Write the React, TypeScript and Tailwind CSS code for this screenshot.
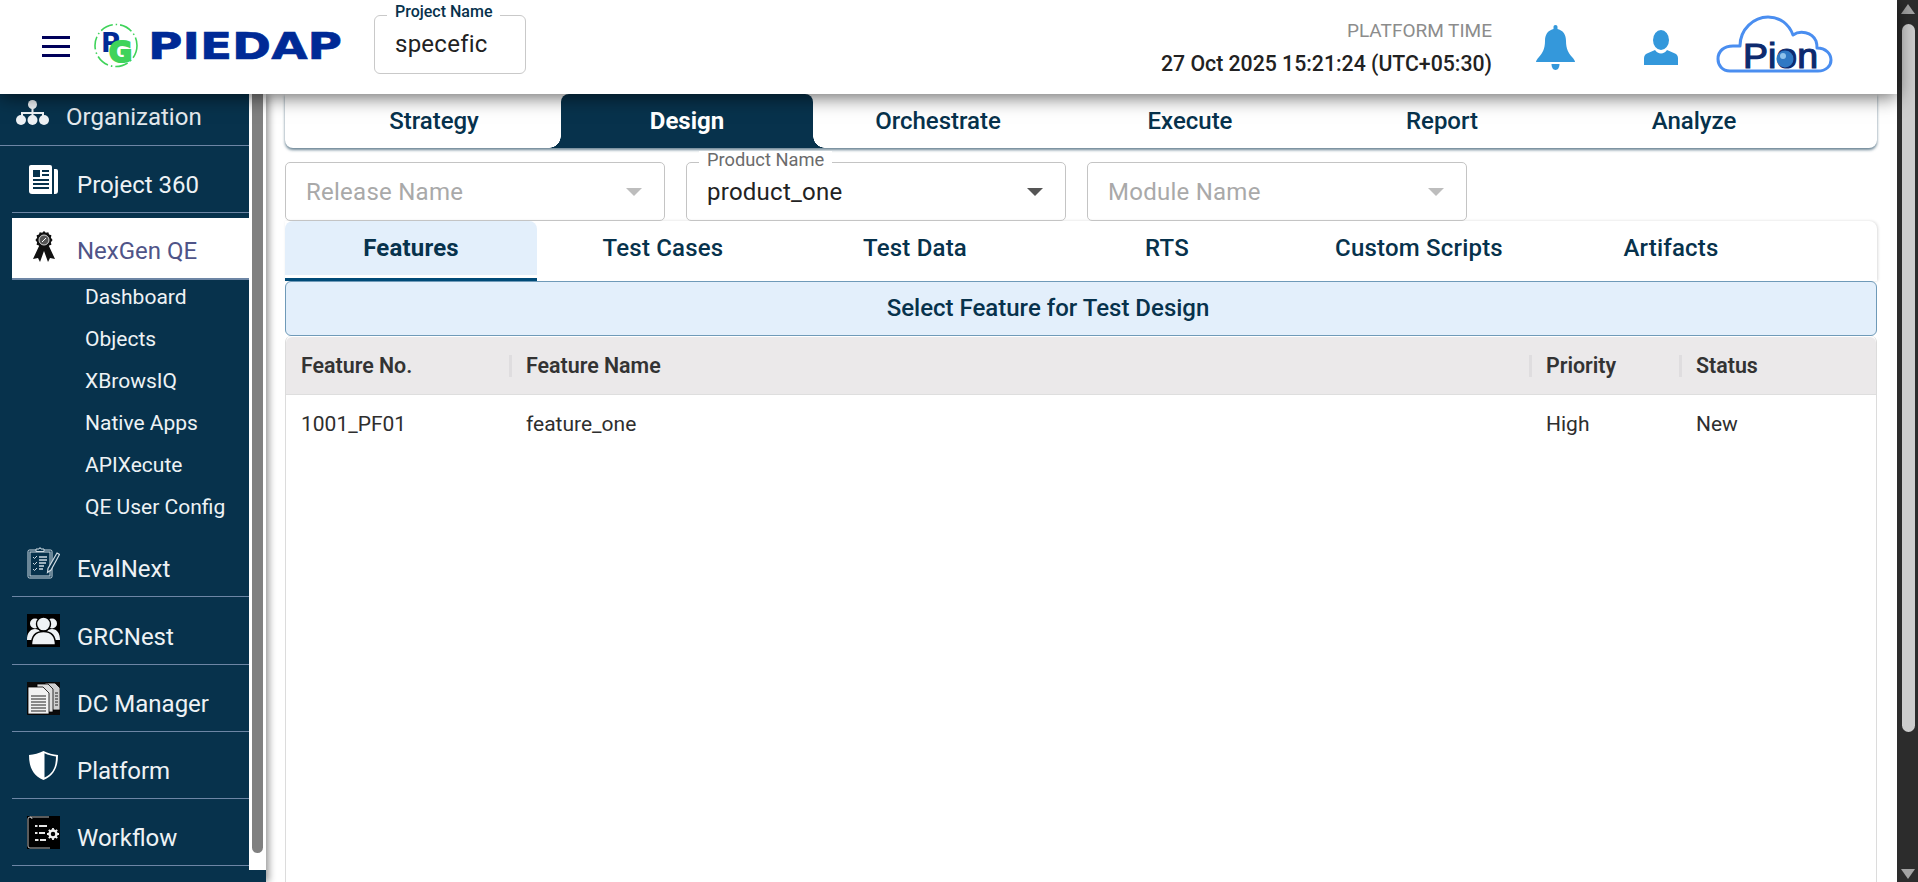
import { ReactNode } from 'react';

const subItems = ['Dashboard', 'Objects', 'XBrowsIQ', 'Native Apps', 'APIXecute', 'QE User Config'];
const stages = ['Strategy', 'Design', 'Orchestrate', 'Execute', 'Report', 'Analyze'];
const designTabs = ['Features', 'Test Cases', 'Test Data', 'RTS', 'Custom Scripts', 'Artifacts'];

/* ── Logos ── */
const PiedapLogo = () => (
  <svg width="250" height="50" viewBox="0 0 250 50" className="shrink-0">
    <circle cx="22" cy="22.5" r="21" fill="none" stroke="#3fd35a" strokeWidth="1.6" strokeDasharray="13 3 1.5 3" />
    <text x="7" y="29" fontFamily="DejaVu Sans" fontWeight="700" fontSize="26" fill="#002a96">P</text>
    <text x="15" y="39" fontFamily="DejaVu Sans" fontWeight="700" fontSize="28" fill="#3fd35a" stroke="#3fd35a" strokeWidth="2.2">G</text>
    <text x="54" y="36" fontFamily="DejaVu Sans" fontWeight="700" fontSize="37" fill="#002a96" stroke="#002a96" strokeWidth="0.6" textLength="194" lengthAdjust="spacingAndGlyphs">PIEDAP</text>
  </svg>
);

const PionLogo = () => (
  <svg width="130" height="70" viewBox="0 0 130 70" className="shrink-0">
    <path
      d="M20 60 C12 60 8 54 8 48 C8 40 14 35 23 35 L30 35 C30 18 44 6 58 6 C70 6 79 13 83 24 C90 19 102 21 106 30 C107 33 107 35 107 37 C116 37 121 43 121 49 C121 55 116 60 108 60 Z"
      fill="#fff"
      stroke="#4a8ef0"
      strokeWidth="3"
      strokeLinejoin="round"
    />
    <text x="33" y="57" fontFamily="Liberation Sans" fontSize="35" fill="#0d2a6e" stroke="#0d2a6e" strokeWidth="1.2" textLength="75" lengthAdjust="spacingAndGlyphs">Pion</text>
    <circle cx="75" cy="48" r="8.5" fill="#2f78c4" />
    <circle cx="73" cy="45" r="3" fill="#8fc2ec" />
  </svg>
);

/* ── Sidebar icons ── */
const OrgIcon = () => (
  <svg width="33" height="25" viewBox="0 0 33 25" fill="#eef2f5">
    <circle cx="16.5" cy="4.5" r="4.5" />
    <path d="M15.5 8h2v4h10.5v4h-2v-2h-8.5v2h-2v-2H7v2H5v-4h10.5z" />
    <circle cx="5" cy="20" r="5" />
    <circle cx="16.5" cy="20" r="5" />
    <circle cx="28" cy="20" r="5" />
  </svg>
);

const ProjectIcon = () => (
  <svg width="29" height="29" viewBox="0 0 29 29">
    <path d="M2 0h19a2 2 0 0 1 2 2v27H3a3 3 0 0 1-3-3V2a2 2 0 0 1 2-2z" fill="#fff" />
    <path d="M25 4h2a2 2 0 0 1 2 2v20a3 3 0 0 1-3 3h-1z" fill="#fff" />
    <rect x="24" y="0" width="1" height="29" fill="#07324c" />
    <path d="M4 5h7v7H4zM13 5h7v2h-7zM13 9h7v2h-7zM4 14h16v2H4zM4 18h16v2H4zM4 22h16v2H4z" fill="#07324c" />
  </svg>
);

const BadgeIcon = () => (
  <svg width="22" height="31" viewBox="0 0 22 31">
    <path d="M7 13 L0 28 L5 27 L7 31 L11 20 L15 31 L17 27 L22 28 L15 13z" fill="#111" />
    <path d="M11 0l1.800 1.700 2.500-.5.8 2.300 2.300.8-.5 2.500L19.600 9l-1.700 2.200.5 2.500-2.300.8-.8 2.300-2.500-.5L11 18l-1.800-1.700-2.500.5-.8-2.300-2.300-.8.5-2.500L2.400 9l1.700-2.200-.5-2.500 2.300-.8.8-2.300 2.500.5z" fill="#111" />
    <circle cx="11" cy="9" r="5" fill="#555" stroke="#fff" strokeWidth="0.8" />
    <path d="M9 11l4-4" stroke="#fff" strokeWidth="1" />
  </svg>
);

const EvalIcon = () => (
  <svg width="33" height="32" viewBox="0 0 33 32" fill="none" stroke="#cfdbe3" strokeWidth="1">
    <rect x="1" y="3" width="24" height="28" rx="1.500" />
    <rect x="3" y="5" width="20" height="24" />
    <path d="M9 4V2h3l1-1.500 1 1.500h3v2.500H9z" fill="#07324c" />
    <path d="M6 10l1.500 1.500L10 9M6 16l1.500 1.500L10 15M6 22l1.500 1.500L10 21" />
    <path d="M12 10h8M12 13h8M12 16h7M12 19h5M12 22h4" strokeWidth="1.300" />
    <path d="M30 6l2.500 1.500L24 23l-3.500 2.500.5-4z" fill="#07324c" strokeWidth="1.200" />
  </svg>
);

const UsersIcon = () => (
  <svg width="33" height="33" viewBox="0 0 33 33">
    <rect width="33" height="33" fill="#000" />
    <circle cx="8" cy="9.500" r="5" fill="#eef2f5" />
    <circle cx="25" cy="9.500" r="5" fill="#eef2f5" />
    <path d="M0 26c0-7 3-11 8-11s8 4 8 11zM17 26c0-7 3-11 8-11s8 4 8 11z" fill="#eef2f5" />
    <circle cx="16.500" cy="10" r="7" fill="#eef2f5" stroke="#000" strokeWidth="1.400" />
    <path d="M4.500 31c0-10 5-13.500 12-13.500s12 3.500 12 13.500z" fill="#eef2f5" stroke="#000" strokeWidth="1.400" />
  </svg>
);

const DocsIcon = () => (
  <svg width="33" height="33" viewBox="0 0 33 33">
    <rect width="33" height="33" fill="#0b0b0b" />
    <path d="M18 1h10l5 5v22H18z" fill="#cfcfcf" stroke="#000" strokeWidth="0.800" />
    <path d="M10 2h11l5 5v23H10z" fill="#dcdcdc" stroke="#000" strokeWidth="0.800" />
    <path d="M1 5h15l6 6v21H1z" fill="#f1f1f1" stroke="#000" strokeWidth="0.800" />
    <path d="M4 14h15M4 17h15M4 20h15M4 23h15M4 26h15M4 29h15" stroke="#222" strokeWidth="1.100" />
    <path d="M28 11h3M28 14h3M28 17h3M28 20h3M28 23h3" stroke="#222" strokeWidth="1" />
  </svg>
);

const ShieldIcon = () => (
  <svg width="29" height="29" viewBox="0 0 29 29">
    <path d="M14.500 0C10 2.500 5 3.500 0 4c0 11 3 20 14.500 25C26 24 29 15 29 4c-5-.5-10-1.500-14.500-4z" fill="#fff" />
    <path d="M15.500 2.300c3.600 1.800 7.600 2.700 11.500 3.300 0 9.400-2.500 17-11.500 21z" fill="#07324c" />
  </svg>
);

const WorkflowIcon = () => (
  <svg width="33" height="33" viewBox="0 0 33 33">
    <rect width="33" height="33" fill="#000" />
    <path d="M1 30V3a2 2 0 0 1 4 0M3 1h19M1 30a2 2 0 0 0 2 2h20" stroke="#e6e6e6" strokeWidth="0.800" fill="none" />
    <path d="M8 10h2.500M12 10h8M8 17h2.500M12 17h6M8 24h3.500M13 24h6" stroke="#e6e6e6" strokeWidth="1.800" />
    <circle cx="26" cy="18" r="3.500" fill="none" stroke="#eee" strokeWidth="2.500" />
    <path d="M26 12v2.500M26 21.500V24M20 18h2.500M29.500 18H32M21.800 13.800l1.800 1.800M28.400 20.400l1.800 1.800M21.800 22.200l1.800-1.800M28.400 15.600l1.800-1.800" stroke="#eee" strokeWidth="1.800" />
  </svg>
);

/* ── Sidebar ── */
const NavRow = ({ icon, label, tall }: { icon: ReactNode; label: string; tall?: boolean }) => (
  <div className={`ml-3 flex shrink-0 items-center gap-[17px] border-b border-[#6d86a5] pl-[15px] ${tall ? 'h-[68px]' : 'h-[67px]'}`}>
    <div className="flex w-[33px] shrink-0 justify-center">{icon}</div>
    <span className="mt-3 text-[24px] leading-7 text-[#eef2f5]">{label}</span>
  </div>
);

const Sidebar = () => (
  <aside className="relative z-[5] flex h-full w-[266px] shrink-0 flex-col bg-[#07324c] pb-3 shadow-[3px_0_7px_rgba(0,0,0,0.4)]">
    <div className="flex min-h-0 flex-1">
      <nav className="flex w-[249px] shrink-0 flex-col overflow-hidden">
        <div className="flex h-[52px] shrink-0 items-center gap-[17px] border-b border-[#6d86a5] pl-4">
          <div className="mb-[14px]"><OrgIcon /></div>
          <span className="mb-[6px] text-[24px] leading-7 text-[#e4eaee]">Organization</span>
        </div>
        <NavRow icon={<ProjectIcon />} label="Project 360" />
        <div className="ml-3 mt-[5px] flex h-[62px] shrink-0 items-center gap-[17px] border-b-2 border-[#6d86a5] bg-white pl-[15px]">
          <div className="flex w-[33px] shrink-0 justify-center pb-[4px]"><BadgeIcon /></div>
          <span className="mt-[6px] text-[24px] leading-7 text-[#4f5488]">NexGen QE</span>
        </div>
        <div className="flex h-[249px] shrink-0 flex-col gap-2 pl-[85px] pt-px">
          {subItems.map(item => (
            <div key={item} className="flex h-[34px] items-center text-[21px] text-[#eef2f5]">{item}</div>
          ))}
        </div>
        <NavRow icon={<EvalIcon />} label="EvalNext" tall />
        <NavRow icon={<UsersIcon />} label="GRCNest" tall />
        <NavRow icon={<DocsIcon />} label="DC Manager" />
        <NavRow icon={<ShieldIcon />} label="Platform" />
        <NavRow icon={<WorkflowIcon />} label="Workflow" />
      </nav>
      {/* inner scrollbar */}
      <div className="h-full w-[17px] bg-white pl-[3px] pr-[3px] pb-[17px]">
        <div className="h-full rounded-b-[6px] bg-[#808080]" />
      </div>
    </div>
  </aside>
);

/* ── Top bar ── */
const TopBar = () => (
  <header className="relative z-10 flex h-[94px] shrink-0 items-center bg-white pl-[42px] pr-[57px] shadow-[0_3px_18px_rgba(0,0,0,0.6)]">
    <div className="flex w-[28px] shrink-0 flex-col gap-[6px] pb-[2px]">
      <span className="h-[3px] bg-[#00005a]" />
      <span className="h-[3px] bg-[#00005a]" />
      <span className="h-[3px] bg-[#00005a]" />
    </div>
    <div className="ml-6 mt-[1px]"><PiedapLogo /></div>
    <div className="relative ml-[30px] mb-[6px] flex h-[59px] w-[152px] shrink-0 items-center rounded-[6px] border border-[#c9c9c9] pl-5">
      <span className="absolute left-3 top-[-13px] bg-white px-2 text-[16px] font-medium leading-[18px] text-[#07324c]">Project Name</span>
      <span className="text-[24px] tracking-[0.25px] text-[#222]">specefic</span>
    </div>
    <div className="ml-auto flex flex-col items-end">
      <span className="text-[19px] leading-6 text-[#8c8c8c]">PLATFORM TIME</span>
      <span className="mt-[9px] text-[21.25px] font-medium leading-6 text-[#222]">27 Oct 2025 15:21:24 (UTC+05:30)</span>
    </div>
    <svg width="39" height="45" viewBox="0 0 39 45" fill="#3498db" className="ml-[44px] shrink-0">
      <path d="M19.500 0c1.300 0 2 .8 2 2v2c6 1.500 8.500 6 8.500 12 0 8 2.500 12 6 16 2 2.300 3 4 3 5H0c0-1 1-2.700 3-5 3.500-4 6-8 6-16 0-6 2.500-10.500 8.500-12V2c0-1.200.7-2 2-2z" />
      <path d="M15.500 39h8c0 3-1.500 6-4 6s-4-3-4-6z" />
    </svg>
    <svg width="34" height="35" viewBox="0 0 34 35" fill="#3498db" className="ml-[69px] shrink-0">
      <ellipse cx="17" cy="10" rx="8" ry="10" />
      <path d="M11 20c1.500 2 3.500 3.500 6 3.500s4.500-1.500 6-3.500l8 3.500c2 1 3 2.500 3 5V35H0v-6.500c0-2.500 1-4 3-5z" />
    </svg>
    <div className="ml-[32px] mt-[-2px]"><PionLogo /></div>
  </header>
);

/* ── Main content ── */
const SelectBox = ({ placeholder, label, value }: { placeholder?: string; label?: string; value?: string }) => (
  <div className="relative flex h-[59px] w-[380px] shrink-0 items-center justify-between rounded-[5px] border border-[#c4c4c4] pl-5 pr-[22px]">
    {label && (
      <span className="absolute left-3 top-[-12px] bg-white px-2 text-[18.3px] leading-[18px] text-[#6b6b6b]">{label}</span>
    )}
    <span className={value ? 'text-[24px] tracking-[0.25px] text-[#222]' : 'text-[24px] tracking-[0.25px] text-[#a9a9a9]'}>
      {value ?? placeholder}
    </span>
    <span
      className={
        value
          ? 'h-0 w-0 border-x-[8px] border-t-[8px] border-x-transparent border-t-[#555]'
          : 'h-0 w-0 border-x-[8px] border-t-[8px] border-x-transparent border-t-[#bdbdbd]'
      }
    />
  </div>
);

const HeaderCell = ({ label, divider = true }: { label: string; divider?: boolean }) => (
  <div className={divider ? 'flex items-center gap-[14px]' : 'flex items-center pl-[15px]'}>
    {divider && <span className="h-[22px] w-[3px] bg-[#dfdddf]" />}
    <span className="text-[21.4px] font-semibold text-[#333]">{label}</span>
  </div>
);

const Content = () => (
  <main className="flex min-w-0 flex-1 flex-col pl-[19px] pr-5">
    {/* Stage tabs */}
    <div className="flex h-[54px] shrink-0 rounded-b-[8px] bg-white pl-6 shadow-[0_2px_3px_rgba(7,50,76,0.6)]">
      {stages.map(s =>
        s === 'Design' ? (
          <div key={s} className="relative flex w-[252px] items-center justify-center rounded-t-[8px] bg-[#07324c] text-[24px] font-bold text-white">
            <span className="absolute bottom-0 left-[-12px] h-3 w-3 bg-[radial-gradient(circle_at_0_0,transparent_11.5px,#07324c_12px)]" />
            <span className="absolute bottom-0 right-[-12px] h-3 w-3 bg-[radial-gradient(circle_at_100%_0,transparent_11.5px,#07324c_12px)]" />
            {s}
          </div>
        ) : (
          <div key={s} className="flex w-[252px] items-center justify-center pr-[2px] text-[24px] font-medium text-[#07324c]">{s}</div>
        )
      )}
    </div>

    {/* Filters */}
    <div className="mt-[14px] flex shrink-0 gap-[21px]">
      <SelectBox placeholder="Release Name" />
      <SelectBox label="Product Name" value="product_one" />
      <SelectBox placeholder="Module Name" />
    </div>

    {/* Design tabs */}
    <div className="flex h-[60px] shrink-0 rounded-tr-[8px] bg-white shadow-[1px_0_3px_rgba(0,0,0,0.15)]">
      {designTabs.map(t =>
        t === 'Features' ? (
          <div key={t} className="flex w-[252px] flex-col">
            <div className="flex h-[54px] items-center justify-center rounded-t-[8px] bg-[#e3effb] text-[24px] font-bold tracking-[0.2px] text-[#07324c]">{t}</div>
            <div className="mt-[3px] h-[3px] bg-[#004a77]" />
          </div>
        ) : (
          <div key={t} className="flex h-[54px] w-[252px] items-center justify-center text-[24px] font-medium tracking-[0.2px] text-[#07324c]">{t}</div>
        )
      )}
    </div>

    {/* Banner */}
    <div className="flex h-[55px] shrink-0 items-center justify-center rounded-[6px] border border-[#6f9ab8] bg-[#e3effb] pb-[2px] pr-[66px] text-[24px] font-medium text-[#07324c]">
      Select Feature for Test Design
    </div>

    {/* Table */}
    <div className="min-h-0 flex-1 rounded-t-[6px] border-x border-[#dcdcdc]">
      <div className="mt-px grid h-[58px] grid-cols-[223px_1020px_150px_1fr] items-center rounded-t-[6px] border-b border-[#dedede] bg-[#ebe9ea] pt-[2px]">
        <HeaderCell label="Feature No." divider={false} />
        <HeaderCell label="Feature Name" />
        <HeaderCell label="Priority" />
        <HeaderCell label="Status" />
      </div>
      <div className="grid h-[58px] grid-cols-[223px_1020px_150px_1fr] items-center pt-[2px] text-[21px] text-[#2e2e2e]">
        <div className="pl-[15px]">1001_PF01</div>
        <div className="pl-[17px]">feature_one</div>
        <div className="pl-[17px]">High</div>
        <div className="pl-[17px]">New</div>
      </div>
    </div>
  </main>
);

/* ── Window scrollbar ── */
const PageScrollbar = () => (
  <div className="flex h-full w-[21px] shrink-0 flex-col items-center bg-[#2c2c2c]">
    <span className="mt-[4px] h-0 w-0 border-x-[7px] border-b-[10px] border-x-transparent border-b-[#a3a3a3]" />
    <div className="ml-[1px] mt-[10px] h-[708px] w-[13px] rounded-full bg-[#cdcdcd]" />
    <span className="mb-[3px] mt-auto h-0 w-0 border-x-[7px] border-t-[10px] border-x-transparent border-t-[#a3a3a3]" />
  </div>
);

export default function App() {
  return (
    <div className="flex h-[882px] w-[1918px] overflow-hidden bg-white font-[Roboto,sans-serif]">
      <div className="flex w-[1897px] flex-col">
        <TopBar />
        <div className="flex min-h-0 flex-1">
          <Sidebar />
          <Content />
        </div>
      </div>
      <PageScrollbar />
    </div>
  );
}
